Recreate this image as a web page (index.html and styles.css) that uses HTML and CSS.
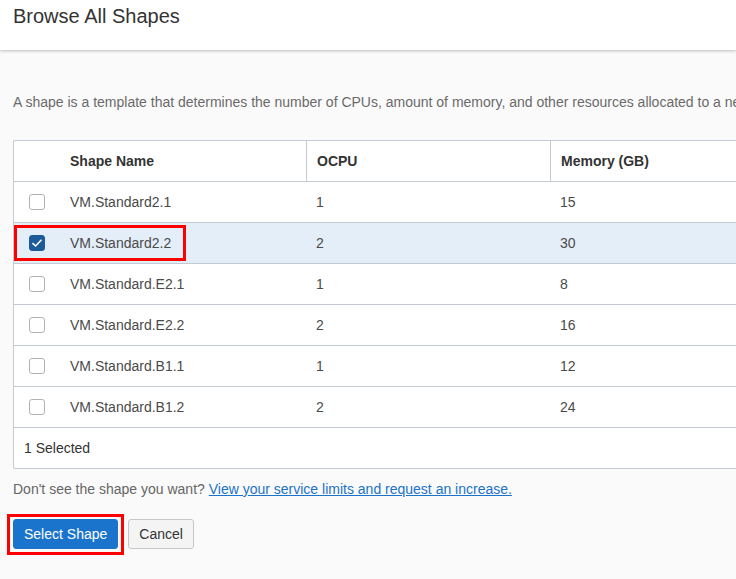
FILE: index.html
```html
<!DOCTYPE html>
<html>
<head>
<meta charset="utf-8">
<link rel="stylesheet" href="styles.css">
</head>
<body>
<header class="header"><h1 class="title">Browse All Shapes</h1></header>
<main class="content">
  <p class="desc">A shape is a template that determines the number of CPUs, amount of memory, and other resources allocated to a newly created instance.</p>
  <div class="table">
    <div class="row head">
      <div class="cell cb"></div>
      <div class="cell name">Shape Name</div>
      <div class="cell col div">OCPU</div>
      <div class="cell col div">Memory (GB)</div>
    </div>
    <div class="row">
      <div class="cell cb"><span class="box"></span></div>
      <div class="cell name">VM.Standard2.1</div>
      <div class="cell col">1</div>
      <div class="cell col">15</div>
    </div>
    <div class="row sel">
      <div class="cell cb"><span class="box on"><svg width="12" height="10" viewBox="0 0 12 10"><path d="M1.5 5.2 L4.6 8 L10.5 1.8" fill="none" stroke="#fff" stroke-width="1.6"/></svg></span></div>
      <div class="cell name">VM.Standard2.2</div>
      <div class="cell col">2</div>
      <div class="cell col">30</div>
      <span class="mark"></span>
    </div>
    <div class="row">
      <div class="cell cb"><span class="box"></span></div>
      <div class="cell name">VM.Standard.E2.1</div>
      <div class="cell col">1</div>
      <div class="cell col">8</div>
    </div>
    <div class="row">
      <div class="cell cb"><span class="box"></span></div>
      <div class="cell name">VM.Standard.E2.2</div>
      <div class="cell col">2</div>
      <div class="cell col">16</div>
    </div>
    <div class="row">
      <div class="cell cb"><span class="box"></span></div>
      <div class="cell name">VM.Standard.B1.1</div>
      <div class="cell col">1</div>
      <div class="cell col">12</div>
    </div>
    <div class="row">
      <div class="cell cb"><span class="box"></span></div>
      <div class="cell name">VM.Standard.B1.2</div>
      <div class="cell col">2</div>
      <div class="cell col">24</div>
    </div>
    <div class="foot">1 Selected</div>
  </div>
  <p class="hint">Don't see the shape you want? <a href="#" class="link">View your service limits and request an increase.</a></p>
  <div class="actions">
    <button class="btn primary">Select Shape</button>
    <button class="btn">Cancel</button>
  </div>
</main>
</body>
</html>
```
FILE: styles.css
```css
html, body { margin: 0; padding: 0; }
body {
  background: #fafafa;
  font-family: "Liberation Sans", Arial, sans-serif;
  font-size: 14px;
  color: #333;
  width: 736px;
  height: 579px;
  overflow: hidden;
}
.header {
  height: 50px;
  background: #fff;
  box-shadow: 0 1px 3px rgba(0,0,0,0.25);
  padding: 0 13px;
  box-sizing: border-box;
  position: relative;
}
.title {
  margin: 0;
  padding-top: 4px;
  font-size: 20px;
  font-weight: normal;
  line-height: 24px;
  color: #333;
}
.content { padding-left: 13px; }
.desc {
  margin: 42px 0 0;
  line-height: 20px;
  color: #6a6a6a;
  white-space: nowrap;
}
.table {
  margin-top: 28px;
  width: 780px;
  border: 1px solid #c3cad1;
  border-right: none;
  border-radius: 2px 0 0 2px;
  background: #fff;
}
.row {
  display: grid;
  grid-template-columns: 43px 249px 244px 1fr;
  height: 41px;
  border-bottom: 1px solid #c3cad1;
  box-sizing: border-box;
  position: relative;
  color: #4a4a4a;
}
.row.head { font-weight: bold; color: #333; }
.row.sel { background: #e4eef8; }
.cell {
  display: flex;
  align-items: center;
}
.cb { padding-left: 15px; }
.name { padding-left: 13px; }
.col { padding-left: 10px; }
.div { border-left: 1px solid #c3cad1; }
.box {
  width: 16px;
  height: 16px;
  box-sizing: border-box;
  border: 1px solid #b3b3b3;
  border-radius: 3px;
  background: #fff;
  display: flex;
  align-items: center;
  justify-content: center;
}
.box.on {
  background: #1d5a98;
  border-color: #1d5a98;
}
.mark {
  position: absolute;
  left: 0;
  top: 2px;
  width: 172px;
  height: 36px;
  border: 3px solid #f00;
  box-sizing: border-box;
}
.foot {
  height: 40px;
  display: flex;
  align-items: center;
  padding-left: 10px;
  color: #333;
}
.hint {
  margin: 10px 0 0;
  line-height: 20px;
  color: #666;
}
.link { color: #1a73c8; text-decoration: underline; }
.actions {
  margin-top: 20px;
  display: flex;
  gap: 10px;
}
.btn {
  height: 30px;
  font-family: "Liberation Sans", Arial, sans-serif;
  font-size: 14px;
  border-radius: 3px;
  border: 1px solid #c7c7c7;
  background: #f4f4f4;
  color: #333;
  padding: 0 10px;
  margin: 0;
  position: relative;
}
.btn.primary {
  background: #1b74cc;
  border-color: #1b74cc;
  color: #fff;
  padding: 0 10px;
}
.btn.primary::after {
  content: "";
  position: absolute;
  left: -7px;
  right: -7px;
  top: -6px;
  bottom: -7px;
  border: 3px solid #f00;
}
```
